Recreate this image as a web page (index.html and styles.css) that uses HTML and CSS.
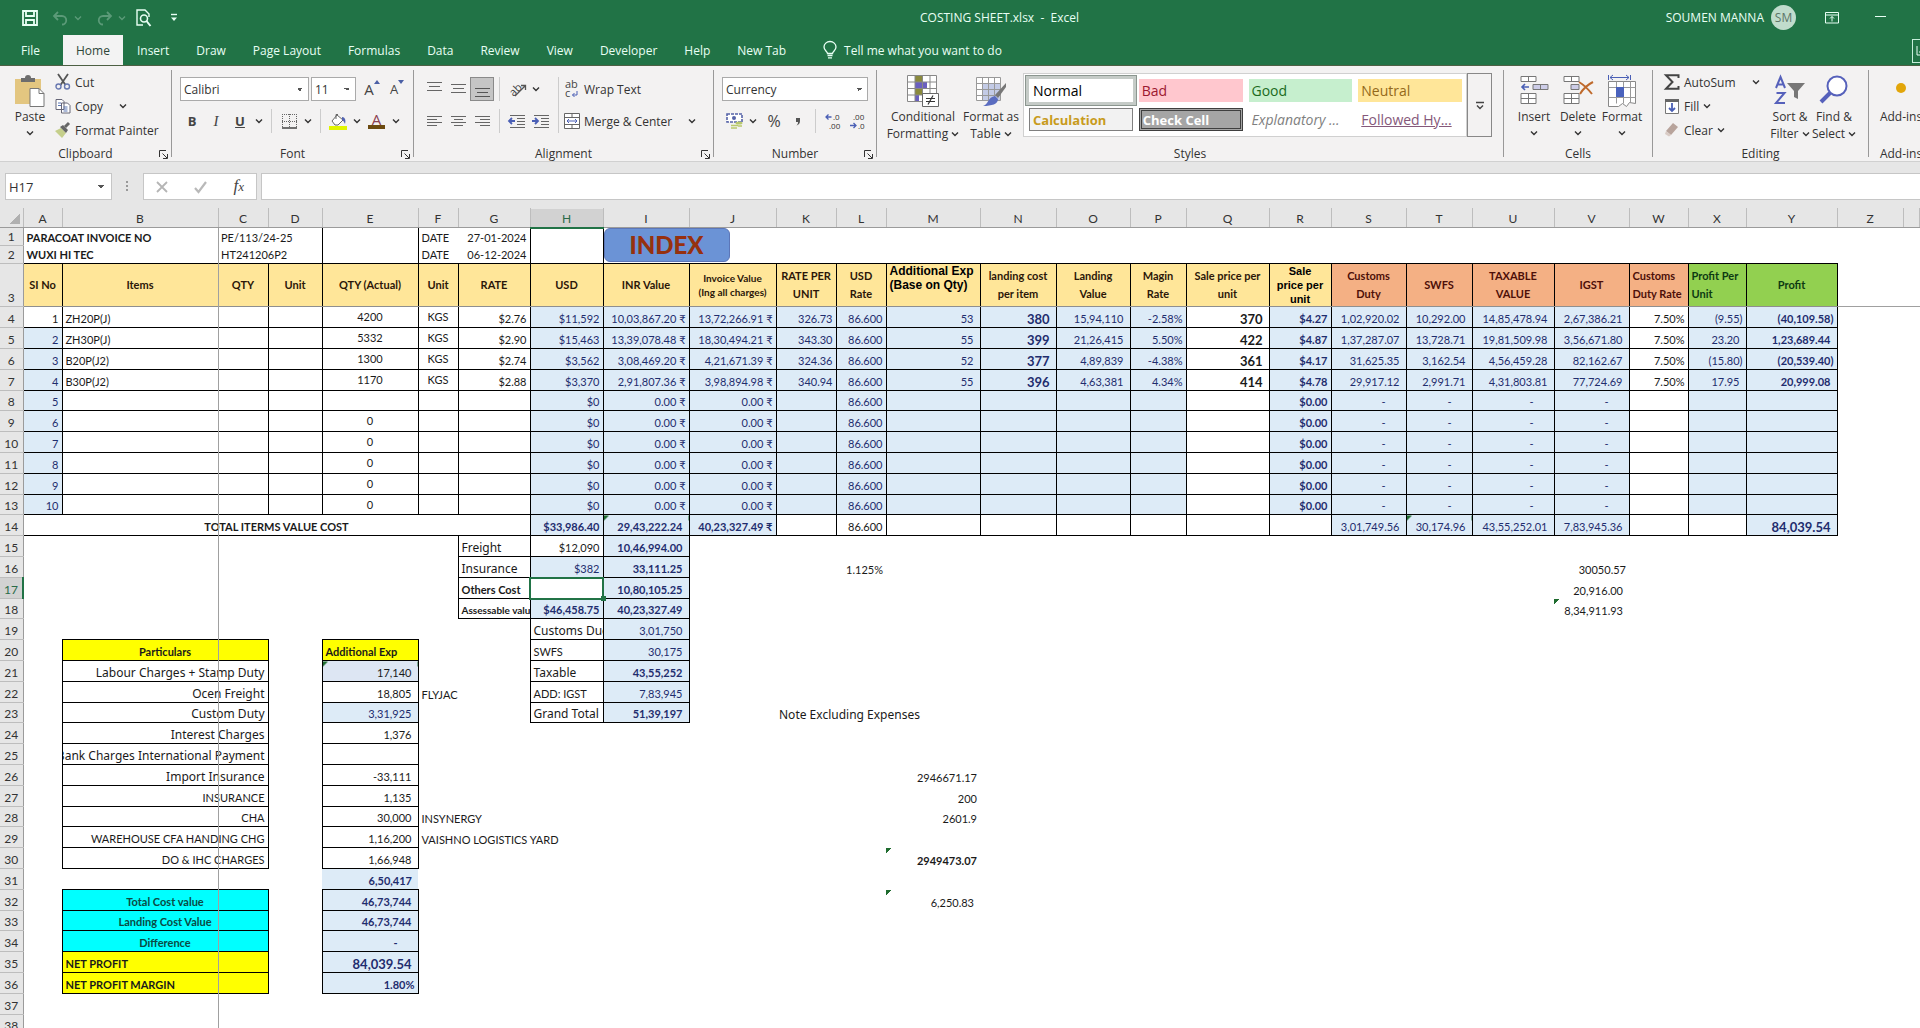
FILE: index.html
```html
<!DOCTYPE html>
<html lang="en">
<head>
    <meta charset="UTF-8">
    <meta name="viewport" content="width=device-width, initial-scale=1.0">
    <title>COSTING SHEET.xlsx - Excel</title>
    <link rel="stylesheet" href="styles.css">
</head>
<body>
    <svg class="defs" width="0" height="0" aria-hidden="true">
        <symbol id="chev" viewBox="0 0 8 8"><path d="M1 2.500l3 3 3-3" fill="none" stroke="currentColor" stroke-width="1.400"/></symbol>
        <symbol id="launch" viewBox="0 0 9 9"><path d="M.5 7V.5H7M3.500 3.500l4.500 4.500M8.500 4v4.500H4" fill="none" stroke="currentColor"/></symbol>
    </svg>

    <header>
        <div class="titlebar">
            <div class="quick">
                <button type="button" aria-label="Save"><svg width="16" height="16" viewBox="0 0 16 16"><path d="M1 1h14v14H1zM4 1v5h8V1M4 15v-5h8v5" fill="none" stroke="currentColor" stroke-width="1.800"/></svg></button>
                <button type="button" class="dim" aria-label="Undo"><svg width="17" height="14" viewBox="0 0 17 14"><path d="M6 1L2 5l4 4M2 5h8a4 4 0 0 1 0 8.500" fill="none" stroke="currentColor" stroke-width="1.800"/></svg><svg class="chev"><use href="#chev"/></svg></button>
                <button type="button" class="dim" aria-label="Redo"><svg width="17" height="14" viewBox="0 0 17 14"><path d="M11 1l4 4-4 4M15 5H7a4 4 0 0 0 0 8.500" fill="none" stroke="currentColor" stroke-width="1.800"/></svg><svg class="chev"><use href="#chev"/></svg></button>
                <button type="button" aria-label="Print preview"><svg width="16" height="18" viewBox="0 0 16 18"><path d="M13 8V5L9 1H1v15h6" fill="none" stroke="currentColor" stroke-width="1.400"/><circle cx="8" cy="9.500" r="3.500" fill="none" stroke="currentColor" stroke-width="1.600"/><path d="M10.500 12l4 5" stroke="currentColor" stroke-width="2"/></svg></button>
                <button type="button" aria-label="Customize toolbar"><svg width="8" height="9" viewBox="0 0 8 9"><path d="M1 1.500h6" stroke="currentColor" stroke-width="1.400"/><path d="M1 4.500h6l-3 3.500z" fill="currentColor"/></svg></button>
            </div>
            <div class="doc-title">COSTING SHEET.xlsx&nbsp; -&nbsp; Excel</div>
            <div class="account">
                <span>SOUMEN MANNA</span>
                <span class="avatar">SM</span>
                <button type="button" aria-label="Ribbon display options"><svg width="14" height="12" viewBox="0 0 14 12"><path d="M.5.500h13v10.500H.5zM.5 3h13M7 9.500V4.500M5 6.500l2-2 2 2" fill="none" stroke="currentColor"/></svg></button>
                <button type="button" aria-label="Minimize"><svg width="11" height="8" viewBox="0 0 11 8"><path d="M0 2.500h11" stroke="currentColor"/></svg></button>
            </div>
        </div>

        <nav class="tabs">
            <a href="#">File</a>
            <a href="#" class="active">Home</a>
            <a href="#">Insert</a>
            <a href="#">Draw</a>
            <a href="#">Page Layout</a>
            <a href="#">Formulas</a>
            <a href="#">Data</a>
            <a href="#">Review</a>
            <a href="#">View</a>
            <a href="#">Developer</a>
            <a href="#">Help</a>
            <a href="#">New Tab</a>
            <a href="#" class="tell"><svg width="14" height="18" viewBox="0 0 14 18"><path d="M4.500 12.500c0-2-3.500-3-3.500-6.500a6 5.500 0 0 1 12 0c0 3.500-3.500 4.500-3.500 6.500zM4.500 14.500h5M5 16.800h4" fill="none" stroke="currentColor" stroke-width="1.300"/></svg>Tell me what you want to do</a>
            <button type="button" class="share" aria-label="Share"><svg width="8" height="12" viewBox="0 0 8 12"><path d="M4 1v9h4M6 7h2" fill="none" stroke="currentColor"/></svg></button>
        </nav>
    </header>

    <div class="ribbon">
        <section class="group clipboard">
            <div class="group-body">
                <button type="button" class="big">
                    <svg width="32" height="32" viewBox="0 0 32 32"><path d="M1 4h26v25H1z" fill="#e3c680"/><path d="M7 7V3h4a3 3 0 0 1 6 0h4v4z" fill="#6d6d6d"/><path d="M16 13.500h9l5 5V31.500H16z" fill="#fff" stroke="#777"/><path d="M25 13.500v5h5" fill="none" stroke="#777"/></svg>
                    Paste<svg class="chev"><use href="#chev"/></svg>
                </button>
                <div class="stack">
                    <button type="button" class="row-btn"><svg width="16" height="16" viewBox="0 0 16 16"><path d="M3 0l7.500 11M13 0L5.500 11" stroke="#555" stroke-width="1.800"/><circle cx="3.500" cy="12.500" r="2.500" fill="none" stroke="#6878b0" stroke-width="1.400"/><circle cx="12" cy="12.500" r="2.500" fill="none" stroke="#6878b0" stroke-width="1.400"/></svg>Cut</button>
                    <button type="button" class="row-btn copy"><svg width="16" height="16" viewBox="0 0 16 16"><path d="M1 1.500h6l2 2v8H1zM6.500 5h6l2.500 2.500v7.500H6.500z" fill="#fff" stroke="#667"/><path d="M3 5h3M3 7.500h3M8.500 9h4M8.500 11h4M8.500 13h4" stroke="#5b76b5"/></svg>Copy<svg class="chev"><use href="#chev"/></svg></button>
                    <button type="button" class="row-btn"><svg width="16" height="16" viewBox="0 0 16 16"><path d="M0 9l6-3 5 5-4 5z" fill="#c5cf8b"/><path d="M5 5l3-2 5 5-2 3z" fill="#666"/><path d="M10 5l4-4" stroke="#666" stroke-width="3"/></svg>Format Painter</button>
                </div>
            </div>
            <h2>Clipboard<svg class="launch"><use href="#launch"/></svg></h2>
        </section>

        <section class="group font">
            <div class="group-body rows">
                <div class="tools">
                    <select class="font-name" aria-label="Font"><option>Calibri</option></select>
                    <select class="font-size" aria-label="Font size"><option>11</option></select>
                    <button type="button" class="tool wide grow" aria-label="Increase font size">A<svg width="6" height="4" viewBox="0 0 6 4"><path d="M0 4l3-4 3 4z" fill="#4a5fa5"/></svg></button>
                    <button type="button" class="tool wide shrink" aria-label="Decrease font size">A<svg width="6" height="4" viewBox="0 0 6 4"><path d="M0 0l3 4 3-4z" fill="#4a5fa5"/></svg></button>
                </div>
                <div class="tools">
                    <button type="button" class="tool"><b>B</b></button>
                    <button type="button" class="tool serif"><i>I</i></button>
                    <button type="button" class="tool"><b><u>U</u></b></button>
                    <button type="button" class="drop" aria-label="Underline options"><svg class="chev"><use href="#chev"/></svg></button>
                    <span class="sep"></span>
                    <button type="button" class="tool" aria-label="Borders"><svg width="15" height="15" viewBox="0 0 15 15"><path d="M.5 0v14M7.500 0v14M14.500 0v14M0 .5h15M0 7.500h15" stroke="#666" stroke-dasharray="1 1"/><path d="M0 14h15" stroke="#444" stroke-width="1.500"/></svg></button>
                    <button type="button" class="drop" aria-label="Border options"><svg class="chev"><use href="#chev"/></svg></button>
                    <span class="sep"></span>
                    <button type="button" class="tool" aria-label="Fill color"><svg width="18" height="17" viewBox="0 0 18 17"><path d="M3 8l5-6 6 5-5 5H6z" fill="#fff" stroke="#666"/><path d="M7 6V1.500h2" fill="none" stroke="#666"/><path d="M13 4c3 0 4 3 3 7-1-2-1-3-3-4z" fill="#5363b0"/><path d="M0 13h18v4H0z" fill="#e1f500"/></svg></button>
                    <button type="button" class="drop" aria-label="Fill color options"><svg class="chev"><use href="#chev"/></svg></button>
                    <button type="button" class="tool font-color" aria-label="Font color">A</button>
                    <button type="button" class="drop" aria-label="Font color options"><svg class="chev"><use href="#chev"/></svg></button>
                </div>
            </div>
            <h2>Font<svg class="launch"><use href="#launch"/></svg></h2>
        </section>

        <section class="group alignment">
            <div class="group-body">
                <div class="rows align-left">
                    <div class="tools">
                        <button type="button" class="tool" aria-label="Top align"><svg width="15" height="18" viewBox="0 0 15 18"><path d="M0 2.500h15M2 6.500h11M0 10.500h15" stroke="#666"/></svg></button>
                        <button type="button" class="tool" aria-label="Middle align"><svg width="15" height="18" viewBox="0 0 15 18"><path d="M0 4.500h15M2 8.500h11M0 12.500h15" stroke="#666"/></svg></button>
                        <button type="button" class="tool pressed" aria-label="Bottom align"><svg width="15" height="18" viewBox="0 0 15 18"><path d="M0 8.500h15M2 12.500h11M0 16.500h15" stroke="#555"/></svg></button>
                        <span class="sep"></span>
                        <button type="button" class="tool" aria-label="Orientation"><svg width="19" height="18" viewBox="0 0 19 18"><text x="1" y="14" transform="rotate(-45 7 10)" font-family="Open Sans" font-size="11" fill="#444">ab</text><path d="M7 16L17 6M13 5.500h4.500V10" fill="none" stroke="#555" stroke-width="1.300"/></svg></button>
                        <button type="button" class="drop" aria-label="Orientation options"><svg class="chev"><use href="#chev"/></svg></button>
                    </div>
                    <div class="tools">
                        <button type="button" class="tool" aria-label="Align left"><svg width="15" height="13" viewBox="0 0 15 13"><path d="M0 1.500h15M0 4.500h10M0 7.500h15M0 10.500h10" stroke="#666"/></svg></button>
                        <button type="button" class="tool" aria-label="Center"><svg width="15" height="13" viewBox="0 0 15 13"><path d="M0 1.500h15M3 4.500h9M0 7.500h15M3 10.500h9" stroke="#666"/></svg></button>
                        <button type="button" class="tool" aria-label="Align right"><svg width="15" height="13" viewBox="0 0 15 13"><path d="M0 1.500h15M5 4.500h10M0 7.500h15M5 10.500h10" stroke="#666"/></svg></button>
                        <span class="sep"></span>
                        <button type="button" class="tool" aria-label="Decrease indent"><svg width="18" height="14" viewBox="0 0 18 14"><path d="M2 1.500h15M9 4.500h8M9 7.500h8M9 10.500h8M2 13.500h15" stroke="#666"/><path d="M7 7H1M4 4L1 7l3 3" fill="none" stroke="#4a5fb5" stroke-width="1.800"/></svg></button>
                        <button type="button" class="tool" aria-label="Increase indent"><svg width="18" height="14" viewBox="0 0 18 14"><path d="M2 1.500h15M9 4.500h8M9 7.500h8M9 10.500h8M2 13.500h15" stroke="#666"/><path d="M0 7h6M3 4l3 3-3 3" fill="none" stroke="#4a5fb5" stroke-width="1.800"/></svg></button>
                    </div>
                </div>
                <span class="sep tall"></span>
                <div class="rows">
                    <button type="button" class="row-btn"><svg width="16" height="18" viewBox="0 0 16 18"><text x="1" y="8" font-family="Open Sans" font-size="11" fill="#444">ab</text><text x="1" y="17" font-family="Open Sans" font-size="11" fill="#444">c</text><path d="M13 11v4H8.500M10.500 13l-2 2 2 2" fill="none" stroke="#4a5fb5"/></svg>Wrap Text</button>
                    <button type="button" class="row-btn merge"><svg width="16" height="16" viewBox="0 0 16 16"><path d="M.5.500h15v15H.5zM.5 4.500h15M.5 11.500h15M8 .5v4M8 11.500v4" fill="#fff" stroke="#666"/><path d="M3 8h10M5 6L3 8l2 2M11 6l2 2-2 2" fill="none" stroke="#4a5fb5"/></svg>Merge &amp; Center<svg class="chev"><use href="#chev"/></svg></button>
                </div>
            </div>
            <h2>Alignment<svg class="launch"><use href="#launch"/></svg></h2>
        </section>

        <section class="group number">
            <div class="group-body rows">
                <div class="tools"><select aria-label="Number format"><option>Currency</option></select></div>
                <div class="tools">
                    <button type="button" class="tool" aria-label="Accounting format"><svg width="17" height="16" viewBox="0 0 17 16"><path d="M1 1h15v8H1z" fill="#fff" stroke="#5563a8" stroke-width="1.600" stroke-dasharray="3 1"/><circle cx="8" cy="5" r="2" fill="#5563a8"/><ellipse cx="13" cy="10" rx="3.500" ry="1.500" fill="#b9c96d"/><path d="M5 12.500h7M5 15h6M12 13h4" stroke="#b9c96d" stroke-width="1.600"/></svg></button>
                    <button type="button" class="drop" aria-label="Accounting options"><svg class="chev"><use href="#chev"/></svg></button>
                    <button type="button" class="tool percent">%</button>
                    <button type="button" class="tool comma" aria-label="Comma style"><svg width="6" height="9" viewBox="0 0 6 9"><path d="M1 1h4v3c0 2-1 3.500-3.500 4.500C3 7 3 6 3 5H1z" fill="#555"/></svg></button>
                    <span class="sep"></span>
                    <button type="button" class="tool" aria-label="Increase decimal"><svg width="17" height="16" viewBox="0 0 17 16"><path d="M6.500 4H1M3.500 1.500L1 4l2.500 2.500" fill="none" stroke="#4a5fb5" stroke-width="1.300"/><text x="8" y="7" font-family="Open Sans" font-size="8" fill="#333">.0</text><text x="4" y="16" font-family="Open Sans" font-size="8" fill="#333">.00</text></svg></button>
                    <button type="button" class="tool" aria-label="Decrease decimal"><svg width="17" height="16" viewBox="0 0 17 16"><path d="M1 12.500h6M4.500 10L7 12.500 4.500 15" fill="none" stroke="#4a5fb5" stroke-width="1.300"/><text x="4" y="7" font-family="Open Sans" font-size="8" fill="#333">.00</text><text x="9" y="16" font-family="Open Sans" font-size="8" fill="#333">.0</text></svg></button>
                </div>
            </div>
            <h2>Number<svg class="launch"><use href="#launch"/></svg></h2>
        </section>

        <section class="group styles">
            <div class="group-body">
                <button type="button" class="big cond">
                    <svg width="32" height="32" viewBox="0 0 32 32"><path d="M.5.500h29v26H.5z" fill="#fff"/><path d="M8 1h7v6H8zM8 14h7v6H8z" fill="#8a8a3c"/><path d="M8 7h12v6H8zM8 20h4v6H8z" fill="#6a5fc0"/><path d="M.5.500h29v26H.5zM.5 7h29M.5 13.500h29M.5 20h29M8 .5v26M15.500.500v26M23 .5v26" fill="none" stroke="#888"/><path d="M15.500 18.500h16v13h-16z" fill="#fff" stroke="#666"/><path d="M19 23.500h9M19 26.500h9M26 20.500l-5 9" stroke="#333" stroke-width="1.200"/></svg>
                    <span>Conditional<br>Formatting <svg class="chev"><use href="#chev"/></svg></span>
                </button>
                <button type="button" class="big fmt">
                    <svg width="32" height="32" viewBox="0 0 32 32"><path d="M1.500 2.500h24v23h-24z" fill="#fff"/><path d="M7.500 8.500h18v17h-18z" fill="#c3cbe6"/><path d="M1.500 2.500h24v23h-24zM1.500 8.500h24M1.500 14.500h24M1.500 20.500h24M7.500 2.500v23M13.500 2.500v23M19.500 2.500v23" fill="none" stroke="#999"/><path d="M31 8L20 20l3 3 8-11z" fill="#777"/><path d="M20 21l3 3c0 5-6 7-15 7 5-1 5-9 12-10z" fill="#5a6cc0"/></svg>
                    <span>Format as<br>Table <svg class="chev"><use href="#chev"/></svg></span>
                </button>
                <div class="gallery">
                    <button type="button" class="normal">Normal</button>
                    <button type="button" class="bad">Bad</button>
                    <button type="button" class="good">Good</button>
                    <button type="button" class="neutral">Neutral</button>
                    <button type="button" class="calc">Calculation</button>
                    <button type="button" class="check">Check Cell</button>
                    <button type="button" class="explain">Explanatory ...</button>
                    <button type="button" class="followed">Followed Hy...</button>
                </div>
                <button type="button" class="more" aria-label="More styles"><svg width="10" height="9" viewBox="0 0 10 9"><path d="M1 1.500h8M2 4.500l3 3 3-3" fill="none" stroke="#444" stroke-width="1.400"/></svg></button>
            </div>
            <h2>Styles</h2>
        </section>

        <section class="group cells">
            <div class="group-body">
                <button type="button" class="big"><svg width="32" height="32" viewBox="0 0 32 32"><path d="M3 1.500h15v5H3zM10.500 1.500v5M3 18.500h15v10H3zM3 23.500h15M10.500 18.500v10" fill="#fff" stroke="#777"/><path d="M15 9.500h15v5H15zM22.500 9.500v5" fill="#cdcde8" stroke="#777"/><path d="M11 12H4M7 9l-3 3 3 3" fill="none" stroke="#4a5fb5" stroke-width="1.600"/></svg>Insert<svg class="chev"><use href="#chev"/></svg></button>
                <button type="button" class="big"><svg width="32" height="32" viewBox="0 0 32 32"><path d="M2 1.500h15v5H2zM9.500 1.500v5M2 18.500h15v10H2zM2 23.500h15M9.500 18.500v10" fill="#fff" stroke="#777"/><path d="M9 9.500h8v5H9z" fill="#cdcde8" stroke="#777"/><path d="M17 7c5 3 9 7 13 12M31 7c-6 3-10 7-13 12" fill="none" stroke="#bf6a2c" stroke-width="2"/></svg>Delete<svg class="chev"><use href="#chev"/></svg></button>
                <button type="button" class="big"><svg width="32" height="32" viewBox="0 0 32 32"><path d="M2.500 6.500h27v22l-6-1-3 4-4-3-4 3H2.500z" fill="#fff" stroke="#888"/><path d="M10.500 6.500v22M17.500 6.500v22M24.500 6.500v21M2.500 12.500h27M2.500 22.500h27" stroke="#999"/><path d="M10 12h8v10h-8z" fill="#4a62bd"/><path d="M2.500 0v5M24.500 0v5M4 2.500h19M7 0L4 2.500 7 5M20 0l3 2.500L20 5" fill="none" stroke="#4a5fb5"/></svg>Format<svg class="chev"><use href="#chev"/></svg></button>
            </div>
            <h2>Cells</h2>
        </section>

        <section class="group editing">
            <div class="group-body">
                <div class="stack">
                    <button type="button" class="row-btn autosum"><svg width="16" height="16" viewBox="0 0 16 16"><path d="M14.500 4V1.200H2L8.500 8 2 14.800h12.500V12" fill="none" stroke="#444" stroke-width="2"/></svg>AutoSum<svg class="chev"><use href="#chev"/></svg></button>
                    <button type="button" class="row-btn"><svg width="16" height="16" viewBox="0 0 16 16"><path d="M1.500 1.500h13v14h-13z" fill="#fff" stroke="#777"/><path d="M1 1h14v3H1z" fill="#666"/><path d="M8 5v8M5 10l3 3 3-3" fill="none" stroke="#4a5fb5" stroke-width="1.800"/></svg>Fill <svg class="chev"><use href="#chev"/></svg></button>
                    <button type="button" class="row-btn"><svg width="16" height="16" viewBox="0 0 16 16"><path d="M9 1l5 4-7 8-5-4z" fill="#b8a49c"/><path d="M2 9l5 4-2 1.500L1 12z" fill="#d9cbc5"/></svg>Clear <svg class="chev"><use href="#chev"/></svg></button>
                </div>
                <button type="button" class="big"><svg width="32" height="32" viewBox="0 0 32 32"><path d="M2 13L6.500 2l4.500 11M3.500 9.500h6M2.500 18h8L2 28h9" fill="none" stroke="#5661bb" stroke-width="2"/><path d="M13 8h18l-7 8v8l-4-2v-6z" fill="#777"/></svg><span>Sort &amp;<br>Filter <svg class="chev"><use href="#chev"/></svg></span></button>
                <button type="button" class="big"><svg width="32" height="32" viewBox="0 0 32 32"><circle cx="19" cy="11" r="9.500" fill="#fff" stroke="#5661bb" stroke-width="2"/><path d="M12 18L3 27" stroke="#5661bb" stroke-width="4"/></svg><span>Find &amp;<br>Select <svg class="chev"><use href="#chev"/></svg></span></button>
            </div>
            <h2>Editing</h2>
        </section>

        <section class="group addins">
            <div class="group-body">
                <button type="button" class="big"><svg width="32" height="32" viewBox="0 0 32 32"><circle cx="16" cy="13" r="5" fill="#e2a60a"/></svg>Add-ins</button>
            </div>
            <h2>Add-ins</h2>
        </section>
    </div>

    <div class="formula-bar">
        <select class="name-box" aria-label="Name box"><option>H17</option></select>
        <span class="dots"></span>
        <div class="formula-buttons">
            <button type="button" aria-label="Cancel"><svg width="12" height="12" viewBox="0 0 12 12"><path d="M1 1l10 10M11 1L1 11" stroke="#b5b5b5" stroke-width="1.800"/></svg></button>
            <button type="button" aria-label="Enter"><svg width="13" height="12" viewBox="0 0 13 12"><path d="M1 7l3.500 4L12 1" fill="none" stroke="#b9b9b9" stroke-width="2.200"/></svg></button>
            <button type="button" class="fx" aria-label="Insert function"><i>f<sub>x</sub></i></button>
        </div>
        <input type="text" class="formula" aria-label="Formula">
    </div>

    <main class="sheet-area">
        <table class="sheet">
            <colgroup>
                <col class="w23"><col class="w39"><col class="w156"><col class="w50"><col class="w54"><col class="w96"><col class="w40"><col class="w72"><col class="w73"><col class="w86"><col class="w87"><col class="w60"><col class="w50"><col class="w94"><col class="w76"><col class="w74"><col class="w56"><col class="w83"><col class="w62"><col class="w75"><col class="w66"><col class="w82"><col class="w75"><col class="w59"><col class="w58"><col class="w91"><col class="w66"><col>
            </colgroup>
            <thead>
                <tr>
                    <th class="corner"></th><th>A</th><th>B</th><th>C</th><th>D</th><th>E</th><th>F</th><th>G</th><th class="sel">H</th><th>I</th><th>J</th><th>K</th><th>L</th><th>M</th><th>N</th><th>O</th><th>P</th><th>Q</th><th>R</th><th>S</th><th>T</th><th>U</th><th>V</th><th>W</th><th>X</th><th>Y</th><th>Z</th><th></th>
                </tr>
            </thead>
            <tbody class="top">
                <tr><th>1</th><td colspan="2" class="bold">PARACOAT INVOICE NO</td><td colspan="2">PE/113/24-25</td><td class="sides"></td><td>DATE</td><td class="r">27-01-2024</td><td rowspan="2" class="sides"></td><td rowspan="2" colspan="2" class="shape"><button type="button" class="index-btn">INDEX</button></td><td colspan="17"></td></tr>
                <tr><th>2</th><td colspan="2" class="bold">WUXI HI TEC</td><td colspan="2">HT241206P2</td><td class="sides"></td><td>DATE</td><td class="r">06-12-2024</td><td colspan="17"></td></tr>
                <tr class="heads">
                    <th>3</th><td>SI No</td><td>Items</td><td>QTY</td><td>Unit</td><td>QTY (Actual)</td><td>Unit</td><td>RATE</td><td>USD</td><td>INR Value</td><td class="small">Invoice Value<br>(Ing all charges)</td><td>RATE PER<br>UNIT</td><td>USD<br>Rate</td><td class="arial top-left">Additional Exp<br>(Base on Qty)</td><td>landing cost<br>per item</td><td>Landing<br>Value</td><td>Magin<br>Rate</td><td>Sale price per<br>unit</td><td class="arial">Sale<br>price per<br>unit</td><td class="orange">Customs<br>Duty</td><td class="orange">SWFS</td><td class="orange">TAXABLE<br>VALUE</td><td class="orange">IGST</td><td class="orange l">Customs<br>Duty Rate</td><td class="green l">Profit Per<br>Unit</td><td class="green">Profit</td><td class="none"></td><td class="none"></td>
                </tr>
            </tbody>
            <tbody class="items">
                <tr><th>4</th><td>1</td><td>ZH20P(J)</td><td></td><td></td><td>4200</td><td>KGS</td><td>$2.76</td><td>$11,592</td><td>10,03,867.20 ₹</td><td>13,72,266.91 ₹</td><td>326.73</td><td>86.600</td><td>53</td><td>380</td><td>15,94,110</td><td>-2.58%</td><td>370</td><td>$4.27</td><td>1,02,920.02</td><td>10,292.00</td><td>14,85,478.94</td><td>2,67,386.21</td><td>7.50%</td><td class="neg">(9.55)</td><td class="neg">(40,109.58)</td></tr>
                <tr><th>5</th><td>2</td><td>ZH30P(J)</td><td></td><td></td><td>5332</td><td>KGS</td><td>$2.90</td><td>$15,463</td><td>13,39,078.48 ₹</td><td>18,30,494.21 ₹</td><td>343.30</td><td>86.600</td><td>55</td><td>399</td><td>21,26,415</td><td>5.50%</td><td>422</td><td>$4.87</td><td>1,37,287.07</td><td>13,728.71</td><td>19,81,509.98</td><td>3,56,671.80</td><td>7.50%</td><td>23.20</td><td>1,23,689.44</td></tr>
                <tr><th>6</th><td>3</td><td>B20P(J2)</td><td></td><td></td><td>1300</td><td>KGS</td><td>$2.74</td><td>$3,562</td><td>3,08,469.20 ₹</td><td>4,21,671.39 ₹</td><td>324.36</td><td>86.600</td><td>52</td><td>377</td><td>4,89,839</td><td>-4.38%</td><td>361</td><td>$4.17</td><td>31,625.35</td><td>3,162.54</td><td>4,56,459.28</td><td>82,162.67</td><td>7.50%</td><td class="neg">(15.80)</td><td class="neg">(20,539.40)</td></tr>
                <tr><th>7</th><td>4</td><td>B30P(J2)</td><td></td><td></td><td>1170</td><td>KGS</td><td>$2.88</td><td>$3,370</td><td>2,91,807.36 ₹</td><td>3,98,894.98 ₹</td><td>340.94</td><td>86.600</td><td>55</td><td>396</td><td>4,63,381</td><td>4.34%</td><td>414</td><td>$4.78</td><td>29,917.12</td><td>2,991.71</td><td>4,31,803.81</td><td>77,724.69</td><td>7.50%</td><td>17.95</td><td>20,999.08</td></tr>
                <tr class="zero"><th>8</th><td>5</td><td></td><td></td><td></td><td></td><td></td><td></td><td>$0</td><td>0.00 ₹</td><td>0.00 ₹</td><td></td><td>86.600</td><td></td><td></td><td></td><td></td><td></td><td>$0.00</td><td>-</td><td>-</td><td>-</td><td>-</td><td></td><td></td><td></td></tr>
                <tr class="zero"><th>9</th><td>6</td><td></td><td></td><td></td><td>0</td><td></td><td></td><td>$0</td><td>0.00 ₹</td><td>0.00 ₹</td><td></td><td>86.600</td><td></td><td></td><td></td><td></td><td></td><td>$0.00</td><td>-</td><td>-</td><td>-</td><td>-</td><td></td><td></td><td></td></tr>
                <tr class="zero"><th>10</th><td>7</td><td></td><td></td><td></td><td>0</td><td></td><td></td><td>$0</td><td>0.00 ₹</td><td>0.00 ₹</td><td></td><td>86.600</td><td></td><td></td><td></td><td></td><td></td><td>$0.00</td><td>-</td><td>-</td><td>-</td><td>-</td><td></td><td></td><td></td></tr>
                <tr class="zero"><th>11</th><td>8</td><td></td><td></td><td></td><td>0</td><td></td><td></td><td>$0</td><td>0.00 ₹</td><td>0.00 ₹</td><td></td><td>86.600</td><td></td><td></td><td></td><td></td><td></td><td>$0.00</td><td>-</td><td>-</td><td>-</td><td>-</td><td></td><td></td><td></td></tr>
                <tr class="zero"><th>12</th><td>9</td><td></td><td></td><td></td><td>0</td><td></td><td></td><td>$0</td><td>0.00 ₹</td><td>0.00 ₹</td><td></td><td>86.600</td><td></td><td></td><td></td><td></td><td></td><td>$0.00</td><td>-</td><td>-</td><td>-</td><td>-</td><td></td><td></td><td></td></tr>
                <tr class="zero"><th>13</th><td>10</td><td></td><td></td><td></td><td>0</td><td></td><td></td><td>$0</td><td>0.00 ₹</td><td>0.00 ₹</td><td></td><td>86.600</td><td></td><td></td><td></td><td></td><td></td><td>$0.00</td><td>-</td><td>-</td><td>-</td><td>-</td><td></td><td></td><td></td></tr>
            </tbody>
            <tbody class="summary">
                <tr><th>14</th><td colspan="7" class="box bold c">TOTAL ITERMS VALUE COST</td><td class="box blue bold r">$33,986.40</td><td class="box blue bold acc flag">29,43,222.24</td><td class="box blue bold r">40,23,327.49 ₹</td><td class="box"></td><td class="box r">86.600</td><td class="box"></td><td class="box"></td><td class="box"></td><td class="box"></td><td class="box"></td><td class="box"></td><td class="box blue acc">3,01,749.56</td><td class="box blue acc flag">30,174.96</td><td class="box blue acc">43,55,252.01</td><td class="box blue acc">7,83,945.36</td><td class="box"></td><td class="box"></td><td class="box blue bold acc large">84,039.54</td><td colspan="2"></td></tr>
                <tr><th>15</th><td colspan="6"></td><td class="box label">Freight</td><td class="box r">$12,090</td><td class="box blue bold acc">10,46,994.00</td><td colspan="18"></td></tr>
                <tr><th>16</th><td colspan="6"></td><td class="box label">Insurance</td><td class="box blue r">$382</td><td class="box blue bold acc">33,111.25</td><td colspan="2"></td><td class="r">1.125%</td><td colspan="9"></td><td class="r">30050.57</td><td colspan="5"></td></tr>
                <tr><th class="sel">17</th><td colspan="6"></td><td class="box bold">Others Cost</td><td class="box cursor"></td><td class="box blue bold acc">10,80,105.25</td><td colspan="12"></td><td class="acc">20,916.00</td><td colspan="5"></td></tr>
                <tr><th>18</th><td colspan="6"></td><td class="box bold small clip">Assessable value</td><td class="box blue bold r">$46,458.75</td><td class="box blue bold acc">40,23,327.49</td><td colspan="12"></td><td class="acc flag">8,34,911.93</td><td colspan="5"></td></tr>
                <tr><th>19</th><td colspan="7"></td><td class="box label clip">Customs Due</td><td class="box blue acc">3,01,750</td><td colspan="18"></td></tr>
                <tr><th>20</th><td></td><td colspan="2" class="box yellow bold c">Particulars</td><td></td><td class="box yellow bold">Additional Exp</td><td colspan="2"></td><td class="box">SWFS</td><td class="box blue acc">30,175</td><td colspan="18"></td></tr>
                <tr><th>21</th><td></td><td colspan="2" class="box label r">Labour Charges + Stamp Duty</td><td></td><td class="box tint acc flag">17,140</td><td colspan="2"></td><td class="box label">Taxable</td><td class="box blue bold acc">43,55,252</td><td colspan="18"></td></tr>
                <tr><th>22</th><td></td><td colspan="2" class="box label r">Ocen Freight</td><td></td><td class="box acc">18,805</td><td>FLYJAC</td><td></td><td class="box">ADD: IGST</td><td class="box blue acc">7,83,945</td><td colspan="18"></td></tr>
                <tr><th>23</th><td></td><td colspan="2" class="box label r">Custom Duty</td><td></td><td class="box blue acc">3,31,925</td><td colspan="2"></td><td class="box label clip">Grand Total</td><td class="box blue bold acc">51,39,197</td><td></td><td class="label">Note Excluding Expenses</td><td colspan="16"></td></tr>
                <tr><th>24</th><td></td><td colspan="2" class="box label r">Interest Charges</td><td></td><td class="box acc">1,376</td><td colspan="22"></td></tr>
                <tr><th>25</th><td></td><td colspan="2" class="box label clip"><div class="spill">Bank Charges International Payment</div></td><td></td><td class="box"></td><td colspan="22"></td></tr>
                <tr><th>26</th><td></td><td colspan="2" class="box label r">Import Insurance</td><td></td><td class="box acc">-33,111</td><td colspan="7"></td><td class="r">2946671.17</td><td colspan="14"></td></tr>
                <tr><th>27</th><td></td><td colspan="2" class="box r">INSURANCE</td><td></td><td class="box acc">1,135</td><td colspan="7"></td><td class="r">200</td><td colspan="14"></td></tr>
                <tr><th>28</th><td></td><td colspan="2" class="box r">CHA</td><td></td><td class="box acc">30,000</td><td>INSYNERGY</td><td colspan="6"></td><td class="r">2601.9</td><td colspan="14"></td></tr>
                <tr><th>29</th><td></td><td colspan="2" class="box r">WAREHOUSE CFA HANDING CHG</td><td></td><td class="box acc">1,16,200</td><td>VAISHNO LOGISTICS YARD</td><td colspan="21"></td></tr>
                <tr><th>30</th><td></td><td colspan="2" class="box r">DO &amp; IHC CHARGES</td><td></td><td class="box acc">1,66,948</td><td colspan="7"></td><td class="r bold flag">2949473.07</td><td colspan="14"></td></tr>
                <tr><th>31</th><td></td><td colspan="2"></td><td></td><td class="blue bold acc">6,50,417</td><td colspan="22"></td></tr>
                <tr><th>32</th><td></td><td colspan="2" class="box cyan bold c">Total Cost value</td><td></td><td class="box blue bold acc">46,73,744</td><td colspan="7"></td><td class="acc flag">6,250.83</td><td colspan="14"></td></tr>
                <tr><th>33</th><td></td><td colspan="2" class="box cyan bold c">Landing Cost Value</td><td></td><td class="box blue bold acc">46,73,744</td><td colspan="22"></td></tr>
                <tr><th>34</th><td></td><td colspan="2" class="box cyan bold c">Difference</td><td></td><td class="box blue bold dash">-</td><td colspan="22"></td></tr>
                <tr><th>35</th><td></td><td colspan="2" class="box yellow bold">NET PROFIT</td><td></td><td class="box blue bold acc large">84,039.54</td><td colspan="22"></td></tr>
                <tr><th>36</th><td></td><td colspan="2" class="box yellow bold">NET PROFIT MARGIN</td><td></td><td class="box blue bold r">1.80%</td><td colspan="22"></td></tr>
                <tr><th>37</th><td colspan="27"></td></tr>
                <tr><th>38</th><td colspan="27"></td></tr>
            </tbody>
        </table>
    </main>
</body>
</html>
```
FILE: styles.css
```css
* {
    box-sizing: border-box;
}
body {
    margin: 0;
    height: 100vh;
    overflow: hidden;
    display: flex;
    flex-direction: column;
    font-family: "Open Sans", "Noto Sans", sans-serif;
    font-size: 12px;
    color: #333;
    background-color: #fff;
}
.defs {
    position: absolute;
}
button {
    font: inherit;
    color: inherit;
    background: none;
    border: none;
    padding: 0;
    display: flex;
    align-items: center;
    justify-content: center;
    white-space: nowrap;
}
svg {
    flex: none;
    overflow: visible;
}
.chev {
    width: 8px;
    height: 8px;
}
header {
    background-color: #217346;
    color: #e8fff4;
    border-bottom: 1px solid #4d6044;
}

/* title bar */
.titlebar {
    display: flex;
    align-items: center;
    height: 35px;
    padding-right: 34px;
}
.quick {
    flex: 0 0 920px;
    display: flex;
    align-items: center;
    gap: 14px;
    padding: 0 22px;
}
.quick button {
    gap: 5px;
}
.quick .dim {
    color: #5b9a78;
}
.quick button:nth-child(4) {
    margin: 0 4px 0 -4px;
}
.doc-title {
    flex: 1;
}
.account {
    display: flex;
    align-items: center;
}
.avatar {
    width: 25px;
    height: 25px;
    margin: 0 29px 0 7px;
    border-radius: 50%;
    background-color: #c0dccc;
    color: #5c7567;
    line-height: 25px;
    text-align: center;
}
.account button + button {
    margin-left: 36px;
}

/* tabs */
.tabs {
    display: flex;
    height: 30px;
    padding-left: 7px;
    overflow: hidden;
}
.tabs a {
    display: flex;
    align-items: center;
    padding: 0 13px 0 14px;
    color: inherit;
    text-decoration: none;
    white-space: nowrap;
}
.tabs a:first-child {
    padding-right: 23px;
}
.tabs .active {
    padding: 0 13px;
    background-color: #f3f3f3;
    color: #2d4638;
}
.tabs .tell {
    gap: 7px;
    padding-left: 24px;
}
.share {
    width: 8px;
    height: 24px;
    margin: 4px 0 0 auto;
    border: 1px solid #c8eedb;
    border-right: none;
}

/* ribbon */
.ribbon {
    display: flex;
    height: 96px;
    flex: none;
    background-color: #f3f2f2;
    border-bottom: 1px solid #d0d0d0;
    overflow: hidden;
}
.group {
    flex: none;
    height: 87px;
    margin-top: 4px;
    border-right: 1px solid #999;
}
.group-body {
    display: flex;
    height: 76px;
}
.group h2 {
    margin: 0;
    display: flex;
    justify-content: center;
    position: relative;
    font-size: 12px;
    line-height: 16px;
    font-weight: normal;
}
.launch {
    position: absolute;
    right: 3px;
    top: 4px;
    width: 9px;
    height: 9px;
}
.clipboard {
    width: 172px;
}
.font {
    width: 242px;
}
.alignment {
    width: 300px;
}
.number {
    width: 163px;
}
.styles {
    flex: 1 0 627px;
}
.cells {
    width: 149px;
}
.editing {
    width: 216px;
}
.addins {
    width: 64px;
    margin-right: -12px;
    border-right: none;
}
.big {
    flex-direction: column;
    justify-content: flex-start;
    padding-top: 5px;
    line-height: 17px;
}
.big > svg:first-child {
    margin-bottom: 1px;
}
.big > .chev {
    margin-top: 4px;
}
.clipboard .big {
    width: 36px;
    margin: 0 7px 0 12px;
}
.cond {
    width: 86px;
    margin-left: 3px;
}
.fmt {
    width: 54px;
    margin: 0 5px 0 -2px;
}
.cells .big {
    width: 44px;
}
.cells .group-body {
    justify-content: center;
}
.editing .big {
    width: 44px;
}
.addins .group-body {
    justify-content: center;
}
.stack .row-btn {
    height: 24px;
}
.row-btn {
    gap: 4px;
    justify-content: flex-start;
}
.copy .chev {
    margin-left: 12px;
}
.merge .chev {
    margin-left: 12px;
}
.autosum .chev {
    margin-left: 12px;
}
.editing .stack {
    width: 115px;
    padding-left: 11px;
}
.rows {
    display: flex;
    flex-direction: column;
    gap: 8px;
    padding-top: 7px;
}
.rows .row-btn {
    height: 24px;
}
.tools {
    display: flex;
    align-items: center;
    height: 24px;
}
.font .rows,
.number .rows,
.alignment .group-body {
    padding-left: 8px;
}
.tool {
    width: 24px;
    height: 24px;
    font-size: 13px;
    color: #444;
}
.serif {
    font-family: "Liberation Serif", serif;
    font-size: 15px;
}
.drop {
    width: 14px;
    height: 24px;
}
.sep {
    width: 1px;
    height: 24px;
    margin: 0 5px;
    background-color: #ccc;
}
.tall {
    height: 56px;
    margin: 7px 5px 0 4px;
}
.align-left {
    width: 132px;
}
.pressed {
    background-color: #c5c5c5;
    border: 1px solid #8a8a8a;
}
.wide {
    align-items: flex-start;
    font-size: 15px;
    line-height: 24px;
}
.wide svg {
    margin-top: 3px;
}
.shrink {
    font-size: 13px;
}
.grow {
    margin: 0 1px 0 4px;
}
.font-color {
    width: 17px;
    height: 16px;
    margin: 0 4px;
    border-bottom: 4px solid #6b4a10;
    color: #8a4050;
    font-size: 15px;
    line-height: 12px;
}
.percent {
    font-size: 16px;
    margin-left: 2px;
}
select {
    appearance: none;
    height: 24px;
    padding: 0 3px;
    border: 1px solid #aaa;
    border-radius: 0;
    font: inherit;
    color: #333;
    background-color: #fff;
    background-image: linear-gradient(45deg, transparent 50%, #555 50%), linear-gradient(-45deg, transparent 50%, #555 50%);
    background-position: right 8px center, right 5px center;
    background-size: 3px 3px;
    background-repeat: no-repeat;
}
.font-name {
    width: 129px;
    margin-right: 2px;
}
.font-size {
    width: 45px;
}
.number select {
    width: 146px;
}

/* cell styles gallery */
.gallery {
    flex: 1;
    display: grid;
    grid-template-columns: repeat(4, 1fr);
    grid-template-rows: 23px 23px;
    gap: 6px;
    height: 64px;
    margin-top: 3px;
    padding: 5px 4px 6px 5px;
    border: 1px solid #d0d0d0;
    background-color: #fff;
}
.gallery button {
    justify-content: flex-start;
    padding-left: 3px;
    font-size: 14px;
    line-height: 18px;
}
.gallery .normal {
    color: #000;
    outline: 3px solid #c5cbc7;
    border: 1px solid #fff;
    box-shadow: 0 0 0 4px #8b968f;
}
.gallery .bad {
    background-color: #ffc7ce;
    color: #9c1830;
}
.gallery .good {
    background-color: #c6efce;
    color: #1a6a20;
}
.gallery .neutral {
    background-color: #ffe699;
    color: #94691a;
}
.gallery .calc {
    border: 1px solid #7f7f7f;
    background-color: #f2f2f2;
    color: #c89b1c;
    font-size: 13px;
    font-weight: bold;
}
.gallery .check {
    padding-left: 1px;
    border: 3px double #3f3f3f;
    background-color: #a5a5a5;
    color: #fff;
    font-size: 13px;
    font-weight: bold;
}
.gallery .explain {
    color: #7f7f7f;
    font-style: italic;
}
.gallery .followed {
    color: #85587a;
    text-decoration: underline;
}
.more {
    width: 25px;
    height: 64px;
    margin: 3px 11px 0 0;
    border: 1px solid #888;
}

/* formula bar */
.formula-bar {
    flex: none;
    display: flex;
    height: 46px;
    padding: 11px 0 8px 5px;
    background-color: #e6e6e6;
}
.name-box {
    width: 107px;
    height: 27px;
    border-color: #c6c6c6;
    font-size: 13px;
    background-position: right 10px center, right 6px center;
    background-size: 4px 4px;
}
.dots {
    width: 2px;
    height: 11px;
    margin: 8px 15px 0 14px;
    background: repeating-linear-gradient(#999 0 2px, transparent 2px 4px);
}
.formula-buttons {
    display: flex;
    align-items: center;
    justify-content: space-between;
    width: 114px;
    height: 27px;
    margin-right: 4px;
    padding: 0 12px;
    border: 1px solid #c6c6c6;
    background-color: #fff;
}
.fx {
    font-family: "Liberation Serif", serif;
    font-size: 17px;
    line-height: 20px;
    color: #444;
}
.fx sub {
    font-size: 13px;
    vertical-align: baseline;
}
.formula {
    flex: 1;
    height: 27px;
    border: 1px solid #c6c6c6;
    border-right: none;
    background-color: #fff;
}

/* sheet */
.sheet-area {
    flex: 1;
    position: relative;
    overflow: hidden;
}
/* freeze pane line, runs over merged cells */
.sheet-area::after {
    content: "";
    position: absolute;
    left: 218px;
    top: 20px;
    bottom: 0;
    width: 1px;
    background-color: #a0a0a0;
}
.sheet {
    width: 100%;
    table-layout: fixed;
    border-collapse: collapse;
    font-family: Lato, "Noto Sans", sans-serif;
    font-size: 11px;
    line-height: 16px;
    color: #1a1a1a;
}
.w23 { width: 23px; }
.w39 { width: 39px; }
.w40 { width: 40px; }
.w50 { width: 50px; }
.w54 { width: 54px; }
.w56 { width: 56px; }
.w58 { width: 58px; }
.w59 { width: 59px; }
.w60 { width: 60px; }
.w62 { width: 62px; }
.w66 { width: 66px; }
.w72 { width: 72px; }
.w73 { width: 73px; }
.w74 { width: 74px; }
.w75 { width: 75px; }
.w76 { width: 76px; }
.w82 { width: 82px; }
.w83 { width: 83px; }
.w86 { width: 86px; }
.w87 { width: 87px; }
.w91 { width: 91px; }
.w94 { width: 94px; }
.w96 { width: 96px; }
.w156 { width: 156px; }
.sheet th {
    padding: 0;
    background-color: #e6e6e6;
    border: 1px solid #bdbdbd;
    font-size: 12px;
    font-weight: normal;
    color: #333;
    vertical-align: bottom;
}
.sheet thead th {
    height: 19px;
    border-top-color: #e6e6e6;
    border-bottom-color: #9b9b9b;
}
.sheet tbody th {
    border-left: none;
    border-right-color: #9b9b9b;
}
.sheet .corner {
    background-image: linear-gradient(135deg, transparent 50%, #b0b0b0 50%);
    background-size: 10px 10px;
    background-position: right 3px bottom 3px;
    background-repeat: no-repeat;
    border-left: none;
}
.sheet .sel {
    background-color: #d2d2d2;
    color: #2a6b48;
}
.sheet thead .sel {
    border-bottom: 2px solid #217346;
}
.sheet tbody .sel {
    border-right: 2px solid #217346;
}
.sheet td {
    padding: 0 3px;
    vertical-align: bottom;
    white-space: nowrap;
}
.sheet tbody tr {
    height: 21px;
}
.sheet tbody tr:nth-child(5n) {
    height: 20px;
}
.sheet .top tr {
    height: 18px;
}
.sheet .top .heads {
    height: 42px;
}
.sheet .sides {
    border-left: 1px solid #000;
    border-right: 1px solid #000;
}
.sheet .shape {
    padding: 0;
    vertical-align: top;
}
.index-btn {
    width: 126px;
    height: 34px;
    border: 1px solid #5c76b8;
    border-radius: 6px;
    background-color: #6b93d6;
    color: #96310f;
    font-size: 24px;
    font-weight: 900;
}
.heads td {
    border: 1px solid #000;
    border-bottom-color: #8f8f8f;
    padding: 0 1px;
    background-color: #ffe699;
    color: #2b1608;
    font-weight: bold;
    line-height: 18px;
    text-align: center;
    vertical-align: middle;
}
.sheet .heads .orange {
    background-color: #f4b084;
    color: #4d0f08;
}
.sheet .heads .green {
    background-color: #92d050;
    color: #0d3a12;
}
.sheet .heads .l {
    padding-left: 3px;
    text-align: left;
}
.sheet .small {
    font-size: 10px;
}
.sheet .heads .small {
    line-height: 14px;
}
.sheet .heads .arial {
    font-family: "Liberation Sans", sans-serif;
    line-height: 14px;
    color: #000;
}
.sheet .heads .top-left {
    padding-left: 3px;
    font-size: 12px;
    text-align: left;
    vertical-align: top;
}
.sheet .heads .none {
    border: none;
    border-bottom: 1px solid #a0a0a0;
    background: none;
}
.items td {
    border: 1px solid #000;
    background-color: #ddebf7;
    color: #1f2d6e;
    text-align: right;
}
.items tr:first-child td {
    border-top-color: #8f8f8f;
}
.items td:nth-child(3),
.items td:nth-child(4),
.items td:nth-child(5),
.items td:nth-child(6),
.items td:nth-child(7),
.items td:nth-child(8),
.items td:nth-child(18),
.items td:nth-child(24),
.items tr:first-child td:nth-child(2) {
    background-color: #fff;
    color: #1a1a1a;
}
.items td:nth-child(3) {
    text-align: left;
}
.sheet .items td:nth-child(6),
.sheet .items td:nth-child(7) {
    text-align: center;
    vertical-align: middle;
}
.items td:nth-child(15),
.items td:nth-child(18),
.items td:nth-child(19),
.items td:nth-child(26) {
    font-weight: bold;
}
.items td:nth-child(15),
.items td:nth-child(18) {
    font-size: 13px;
}
.sheet .items td:nth-child(14),
.sheet .items td:nth-child(15),
.sheet .items td:nth-child(16),
.sheet .items td:nth-child(18),
.sheet .items td:nth-child(n+20):not(:nth-child(24)):not(.neg) {
    padding-right: 6px;
}
.sheet .items .zero td:nth-child(n+20):nth-child(-n+23) {
    padding-right: 20px;
}
.sheet .box {
    border: 1px solid #000;
}
.bold {
    font-weight: bold;
}
.r {
    text-align: right;
}
.c {
    text-align: center;
}
.label {
    font-family: "Noto Sans", sans-serif;
    font-size: 12px;
}
/* right-aligned text that runs out on the left */
.spill {
    display: flex;
    justify-content: flex-end;
}
.sheet .acc {
    padding-right: 6px;
    text-align: right;
}
.sheet .dash {
    padding-right: 20px;
    text-align: right;
}
.blue {
    background-color: #ddebf7;
    color: #1f2d6e;
}
.tint {
    background-color: #dde6f3;
}
.yellow {
    background-color: #ffff00;
}
.cyan {
    background-color: #00ffff;
    color: #0b4a44;
}
.sheet .large {
    font-size: 13px;
}
.clip {
    overflow: hidden;
}
.flag {
    background-image: linear-gradient(135deg, #1e6b2e 4px, transparent 4px);
}
.cursor {
    position: relative;
    outline: 2px solid #217346;
    outline-offset: -1px;
}
.cursor::after {
    content: "";
    position: absolute;
    right: -3px;
    bottom: -3px;
    width: 5px;
    height: 5px;
    background-color: #217346;
}
```
